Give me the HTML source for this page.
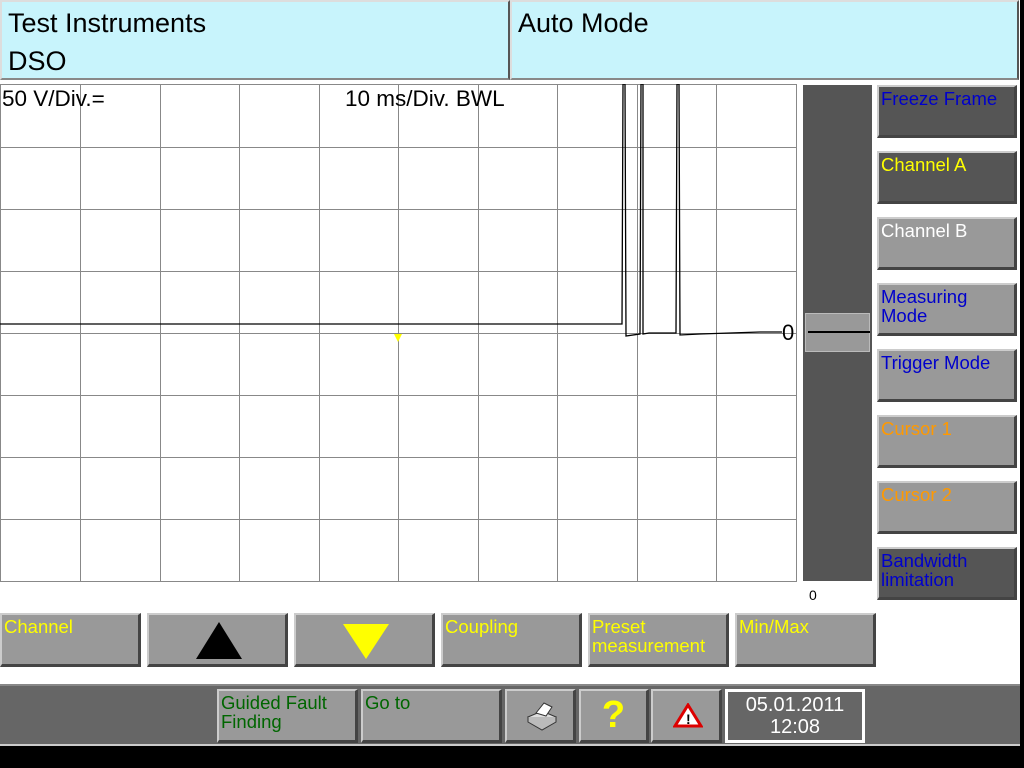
<!DOCTYPE html>
<html><head><style>
*{margin:0;padding:0;box-sizing:border-box}
body{width:1024px;height:768px;background:#fff;position:relative;overflow:hidden;font-family:"Liberation Sans",Arial,sans-serif}
.a{position:absolute}
.hd{background:#c8f4fc;border-right:2px solid #555;border-bottom:2px solid #888;font-size:27px;color:#000}
.b{position:absolute;border-top:2px solid #ccc;border-left:2px solid #ccc;border-right:3px solid #444;border-bottom:3px solid #444;font-size:18.5px;line-height:19px;padding:2px 2px}
.g{background:#999}
.d{background:#555}
</style></head><body>
<div class="a hd" style="left:0;top:0;width:510px;height:80px;border-left:2px solid #ddd;border-top:2px solid #ddd;padding:2px 6px;line-height:38px">Test Instruments<br>DSO</div>
<div class="a hd" style="left:510px;top:0;width:509px;height:80px;border-left:2px solid #ddd;border-top:2px solid #ddd;padding:2px 6px;line-height:38px">Auto Mode</div>
<div class="a" style="left:1020px;top:0;width:4px;height:768px;background:#000"></div>

<svg class="a" style="left:0;top:84px" width="800" height="500">
<g stroke="#888" stroke-width="1">
<rect x="0.5" y="0.5" width="796" height="497" fill="none"/>
<line x1="80.5" y1="0" x2="80.5" y2="498"/><line x1="160.5" y1="0" x2="160.5" y2="498"/><line x1="239.5" y1="0" x2="239.5" y2="498"/><line x1="319.5" y1="0" x2="319.5" y2="498"/><line x1="398.5" y1="0" x2="398.5" y2="498"/><line x1="478.5" y1="0" x2="478.5" y2="498"/><line x1="557.5" y1="0" x2="557.5" y2="498"/><line x1="637.5" y1="0" x2="637.5" y2="498"/><line x1="716.5" y1="0" x2="716.5" y2="498"/>
<line x1="0" y1="63.5" x2="797" y2="63.5"/><line x1="0" y1="125.5" x2="797" y2="125.5"/><line x1="0" y1="187.5" x2="797" y2="187.5"/><line x1="0" y1="249.5" x2="797" y2="249.5"/><line x1="0" y1="311.5" x2="797" y2="311.5"/><line x1="0" y1="373.5" x2="797" y2="373.5"/><line x1="0" y1="435.5" x2="797" y2="435.5"/>
</g>
<polyline fill="none" stroke="#000" stroke-width="1.3" points="0,240 460,240 540,240 622,240 623,0 625,0 626,252 640,250 641,0 643,0 643,250 649,249 676,249 677,0 679,0 680,251 700,250 760,248 782,248"/>
<polygon points="394,250 402,250 398,258" fill="#ff0"/>
<text x="782" y="256" font-size="22" font-family="Liberation Sans" fill="#000">0</text>
<text x="2" y="22" font-size="22.5" font-family="Liberation Sans">50 V/Div.=</text>
<text x="345" y="22" font-size="22.5" font-family="Liberation Sans">10 ms/Div. BWL</text>
</svg>

<div class="a" style="left:803px;top:85px;width:69px;height:496px;background:#555"></div>
<div class="a" style="left:805px;top:313px;width:65px;height:39px;background:#999;border:1px solid #bbb"></div>
<div class="a" style="left:808px;top:331px;width:62px;height:2px;background:#000"></div>
<div class="a" style="left:809px;top:587px;font-size:14px">0</div>

<div class="b d" style="left:877px;top:85px;width:140px;height:53px;color:#00c">Freeze Frame</div>
<div class="b d" style="left:877px;top:151px;width:140px;height:53px;color:#ff0">Channel A</div>
<div class="b g" style="left:877px;top:217px;width:140px;height:53px;color:#fff">Channel B</div>
<div class="b g" style="left:877px;top:283px;width:140px;height:53px;color:#00c">Measuring<br>Mode</div>
<div class="b g" style="left:877px;top:349px;width:140px;height:53px;color:#00c">Trigger Mode</div>
<div class="b g" style="left:877px;top:415px;width:140px;height:53px;color:#f90">Cursor 1</div>
<div class="b g" style="left:877px;top:481px;width:140px;height:53px;color:#f90">Cursor 2</div>
<div class="b d" style="left:877px;top:547px;width:140px;height:53px;color:#00c">Bandwidth limitation</div>

<div class="b g" style="left:0;top:613px;width:141px;height:54px;color:#ff0">Channel</div>
<div class="b g" style="left:147px;top:613px;width:141px;height:54px"><svg class="a" style="left:45px;top:7px" width="50" height="40"><polygon points="25,0 48,37 2,37" fill="#000"/></svg></div>
<div class="b g" style="left:294px;top:613px;width:141px;height:54px"><svg class="a" style="left:45px;top:7px" width="50" height="40"><polygon points="2,2 48,2 25,37" fill="#ff0"/></svg></div>
<div class="b g" style="left:441px;top:613px;width:141px;height:54px;color:#ff0">Coupling</div>
<div class="b g" style="left:588px;top:613px;width:141px;height:54px;color:#ff0">Preset measurement</div>
<div class="b g" style="left:735px;top:613px;width:141px;height:54px;color:#ff0">Min/Max</div>

<div class="a" style="left:0;top:684px;width:1020px;height:62px;background:#666;border-top:2px solid #888;border-bottom:2px solid #ccc"></div>
<div class="a" style="left:0;top:746px;width:1024px;height:22px;background:#000"></div>
<div class="b g" style="left:217px;top:689px;width:141px;height:54px;color:#060">Guided Fault Finding</div>
<div class="b g" style="left:361px;top:689px;width:141px;height:54px;color:#060">Go to</div>
<div class="b g" style="left:505px;top:689px;width:71px;height:54px"><svg class="a" style="left:17px;top:10px" width="36" height="30"><path d="M4,16 L18,10 L32,16 L18,24 Z" fill="#ddd" stroke="#333"/><path d="M4,16 L4,21 L18,29 L32,21 L32,16" fill="#bbb" stroke="#333"/><path d="M12,12 L20,2 L28,6 L22,15 Z" fill="#fff" stroke="#333"/></svg></div>
<div class="b g" style="left:579px;top:689px;width:70px;height:54px;text-align:center;color:#ff0;font-size:38px;font-weight:bold;line-height:44px">?</div>
<div class="b g" style="left:651px;top:689px;width:71px;height:54px"><svg class="a" style="left:20px;top:12px" width="30" height="26"><polygon points="15,2 28,23 2,23" fill="#fff" stroke="#d00" stroke-width="3"/><text x="13" y="21" font-size="14" font-weight="bold" font-family="Liberation Sans">!</text></svg></div>
<div class="a" style="left:725px;top:689px;width:140px;height:54px;background:#666;border:3px solid #fff;color:#fff;font-size:20px;text-align:center;line-height:22px;padding-top:2px">05.01.2011<br>12:08</div>
</body></html>
